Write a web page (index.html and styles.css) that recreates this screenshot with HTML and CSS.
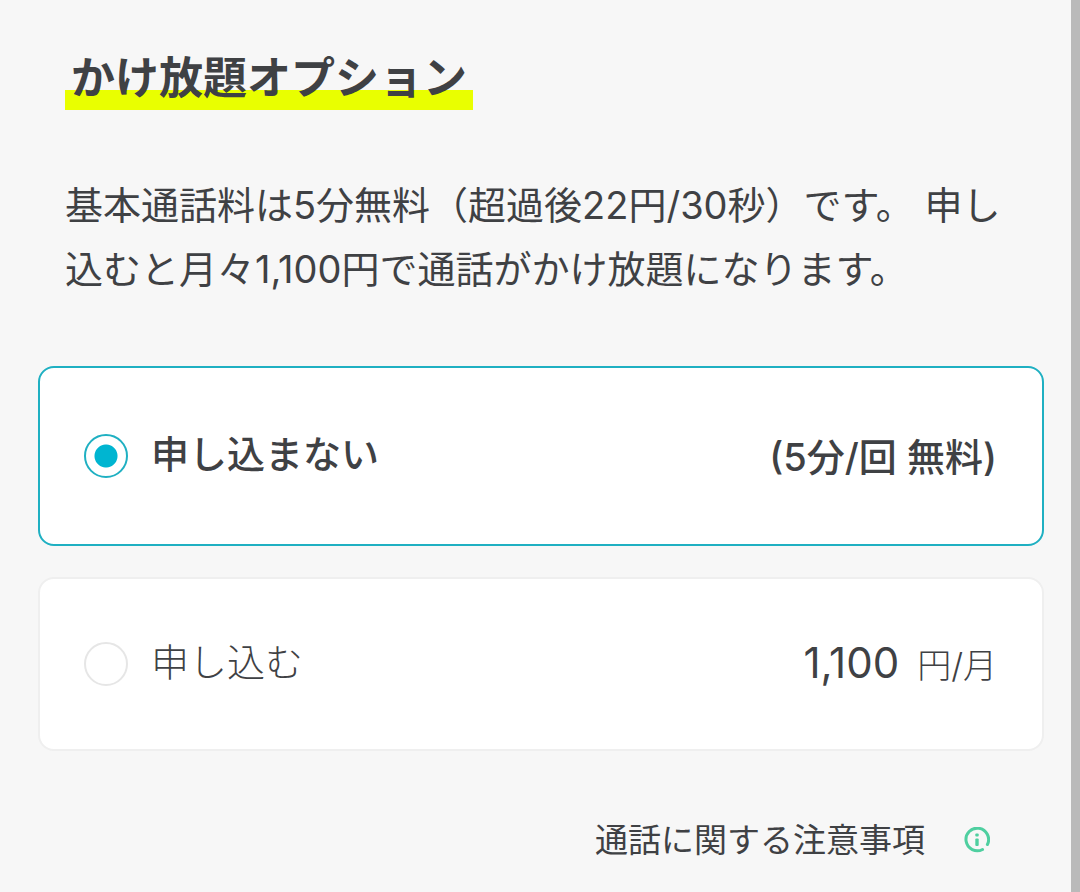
FILE: index.html
```html
<!DOCTYPE html>
<html lang="ja">
<head>
    <meta charset="UTF-8">
    <meta name="viewport" content="width=device-width, initial-scale=1.0">
    <title>かけ放題オプション</title>
    <link rel="stylesheet" href="styles.css">
</head>
<body>
    <main class="container">
        <div class="intro">
            <h1><span class="marker">かけ放題オプション</span></h1>
            <p>基本通話料は5分無料（超過後22円/30秒）です。 申し込むと月々1,100円で通話がかけ放題になります。</p>
        </div>

        <form class="options">
            <label class="option" for="planNone">
                <input type="radio" id="planNone" name="plan" value="none" checked>
                <span class="name">申し込まない</span>
                <span class="price">(5分/回 無料)</span>
            </label>
            <label class="option" for="planUnlimited">
                <input type="radio" id="planUnlimited" name="plan" value="unlimited">
                <span class="name">申し込む</span>
                <span class="price"><span class="amount">1,100</span><span class="unit">円/月</span></span>
            </label>
        </form>

        <a class="note" href="#">
            <span>通話に関する注意事項</span>
            <svg class="info" viewBox="0 0 26 26" aria-hidden="true">
                <path d="M18.5 22.5A11.3 11.3 0 1 1 23.4 17.5" fill="none" stroke="#4fcfa0" stroke-width="3" stroke-linecap="round"/>
                <rect x="11.3" y="6.5" width="3.4" height="3" rx="1" fill="#4fcfa0"/>
                <rect x="11.3" y="11.5" width="3.4" height="7.5" rx="1" fill="#4fcfa0"/>
            </svg>
        </a>
    </main>
</body>
</html>
```

FILE: styles.css
```css
* { box-sizing: border-box; }
body { margin: 0; min-height: 100vh; background: #f7f7f7; border-right: 9px solid #bababa; color: #3f4144; font-family: Inter, "Noto Sans CJK JP", sans-serif; }
.container { padding: 46px 27px 28px 38px; }
.intro { padding: 0 27px; }
h1 { margin: 0 0 63px; font-size: 44px; line-height: 64px; font-weight: 700; }
.marker { display: inline-block; padding: 0 6px; background: linear-gradient(#e9ff00, #e9ff00) bottom / 100% 20px no-repeat; }
p { margin: 0 0 65px; font-size: 38px; line-height: 64px; }

.options { display: flex; flex-direction: column; gap: 31px; }
.option { display: flex; align-items: center; min-height: 174px; padding: 0 45px 0 44px; border: 2px solid #efefef; border-radius: 16px; background: #fff; font-size: 38px; font-weight: 300; cursor: pointer; }
.option:has(input:checked) { min-height: 180px; border-color: #1fb0c2; font-weight: 500; }
.option input { appearance: none; flex: none; width: 44px; height: 44px; margin: 0 23px 0 0; border: 2px solid #e6e6e6; border-radius: 50%; background: #fff; }
.option input:checked { border-color: #1fb0c2; background: radial-gradient(circle, #00b5d1 11px, #fff 12px); }
.name { padding-bottom: 9px; }
.price { margin-left: auto; padding-bottom: 3px; }
.amount { margin-right: 18px; font-size: 42px; font-weight: 400; }
.unit { font-size: 34px; }

.note { display: flex; align-items: center; justify-content: flex-end; gap: 39px; margin-top: 65px; padding-right: 54px; color: inherit; font-size: 33px; line-height: 48px; text-decoration: none; }
.info { width: 26px; height: 26px; }
```
